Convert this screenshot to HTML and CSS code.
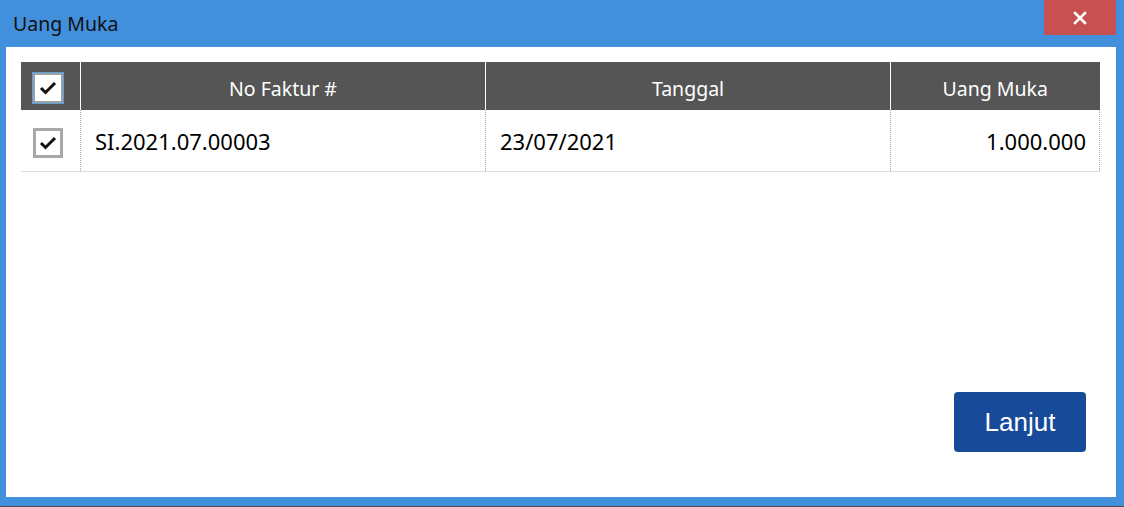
FILE: index.html
```html
<!DOCTYPE html>
<html>
<head>
    <meta charset="utf-8">
    <title>Uang Muka</title>
    <link rel="stylesheet" href="styles.css">
</head>
<body>
    <div class="window">
        <div class="titlebar">
            <span class="title">Uang Muka</span>
            <div class="close">
                <svg width="14" height="14" viewBox="0 0 14 14">
                    <path d="M2 2 L12 12 M12 2 L2 12" stroke="#fff" stroke-width="2.6" stroke-linecap="square"/>
                </svg>
            </div>
        </div>
        <div class="content">
            <table class="grid">
                <tr class="head">
                    <th class="col-check"><span class="check focus"><svg width="18" height="14" viewBox="0 0 18 14"><path d="M2 7 L6.5 11.5 L16 2" stroke="#111" stroke-width="3" fill="none"/></svg></span></th>
                    <th class="col-no">No Faktur #</th>
                    <th class="col-date">Tanggal</th>
                    <th class="col-amount">Uang Muka</th>
                </tr>
                <tr class="row">
                    <td class="col-check"><span class="check"><svg width="18" height="14" viewBox="0 0 18 14"><path d="M2 7 L6.5 11.5 L16 2" stroke="#111" stroke-width="3" fill="none"/></svg></span></td>
                    <td>SI.2021.07.00003</td>
                    <td>23/07/2021</td>
                    <td class="num">1.000.000</td>
                </tr>
            </table>
            <div class="footer">
                <button class="btn">Lanjut</button>
            </div>
        </div>
    </div>
</body>
</html>
```
FILE: styles.css
```css
body
{
    margin: 0;
    font-family: "Noto Sans", "Open Sans", sans-serif;
}
.window
{
    width: 1124px;
    height: 507px;
    box-sizing: border-box;
    background-color: #428fdc;
    border-bottom: 1px solid #4a4a4a;
    display: flex;
    flex-direction: column;
    padding: 0 8px 9px 6px;
}
.titlebar
{
    height: 47px;
    display: flex;
    justify-content: space-between;
    align-items: flex-start;
}
.title
{
    font-size: 19.5px;
    color: #111;
    padding: 10px 0 0 7px;
}
.close
{
    width: 72px;
    height: 35px;
    background-color: #c75050;
    display: flex;
    align-items: center;
    justify-content: center;
}
.content
{
    flex: 1;
    background-color: #fff;
    padding: 15px 16px 45px 15px;
    display: flex;
    flex-direction: column;
}
.grid
{
    border-collapse: collapse;
    width: 1079px;
    table-layout: fixed;
}
.grid th
{
    background-color: #555;
    color: #fff;
    font-weight: normal;
    font-size: 19.5px;
    height: 43px;
    padding: 5px 0 0 0;
    border-left: 1px solid #fff;
}
.grid th:first-child
{
    border-left: none;
}
.col-check { width: 59px; }
.col-no { width: 404px; }
.col-date { width: 404px; }
.grid td
{
    height: 61px;
    font-size: 22px;
    color: #000;
    padding: 0 0 0 14px;
    border-left: 1px dotted #aaa;
    border-bottom: 1px solid #ddd;
}
.grid td:last-child
{
    border-right: 1px dotted #aaa;
}
.grid td:first-child
{
    border-left: none;
    padding: 0;
}
.grid td.num
{
    text-align: right;
    padding-right: 13px;
}
th.col-check, td.col-check
{
    text-align: left;
}
.grid th.col-check
{
    padding-top: 0;
    height: 48px;
}
.grid .col-check .check
{
    margin: 3px 0 0 12px;
}
.check
{
    display: inline-flex;
    align-items: center;
    justify-content: center;
    width: 24px;
    height: 24px;
    border: 3px solid #a8a8a8;
    background-color: #fff;
    vertical-align: middle;
}
.check.focus
{
    width: 26px;
    height: 26px;
    border: 2px solid #a0a0a0;
    outline: 1px solid #5aa0e0;
}
.footer
{
    margin-top: auto;
    display: flex;
    justify-content: flex-end;
    padding-right: 14px;
}
.btn
{
    width: 132px;
    height: 60px;
    border: none;
    border-radius: 4px;
    background-color: #184a9a;
    color: #fff;
    font-family: "Liberation Sans", Arial, sans-serif;
    font-size: 26px;
}
```
